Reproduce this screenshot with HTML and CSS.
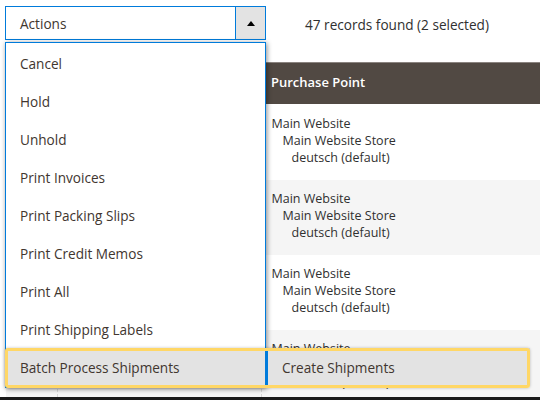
FILE: index.html
```html
<!DOCTYPE html>
<html>
<head>
<meta charset="utf-8">
<link rel="stylesheet" href="styles.css">
</head>
<body>
<div class="page">
  <div class="toolbar">
    <div class="actions">
      <div class="select">
        <span class="select-label">Actions</span>
        <span class="select-btn"><i class="tri"></i></span>
      </div>
      <ul class="menu">
        <li class="menu-item">Cancel</li>
        <li class="menu-item">Hold</li>
        <li class="menu-item">Unhold</li>
        <li class="menu-item">Print Invoices</li>
        <li class="menu-item">Print Packing Slips</li>
        <li class="menu-item">Print Credit Memos</li>
        <li class="menu-item">Print All</li>
        <li class="menu-item">Print Shipping Labels</li>
        <li class="menu-item active">Batch Process Shipments
          <ul class="submenu">
            <li class="submenu-item">Create Shipments</li>
          </ul>
        </li>
      </ul>
      <div class="highlight"></div>
    </div>
    <div class="count">47 records found (2 selected)</div>
  </div>
  <div class="grid-wrap">
    <table class="grid">
      <thead>
        <tr><th class="c1"></th><th class="c2"></th><th class="c3">Purchase Point</th></tr>
      </thead>
      <tbody>
        <tr class="r first"><td class="c1"></td><td class="c2"></td><td class="c3"><span class="l1">Main Website</span><span class="l2">Main Website Store</span><span class="l3">deutsch (default)</span></td></tr>
        <tr class="r alt"><td class="c1"></td><td class="c2"></td><td class="c3"><span class="l1">Main Website</span><span class="l2">Main Website Store</span><span class="l3">deutsch (default)</span></td></tr>
        <tr class="r"><td class="c1"></td><td class="c2"></td><td class="c3"><span class="l1">Main Website</span><span class="l2">Main Website Store</span><span class="l3">deutsch (default)</span></td></tr>
        <tr class="r alt last"><td class="c1"></td><td class="c2"></td><td class="c3"><span class="l1">Main Website</span><span class="l2">Main Website Store</span><span class="l3">deutsch (default)</span></td></tr>
      </tbody>
    </table>
  </div>
  <div class="bottom-bar"></div>
</div>
</body>
</html>
```

FILE: styles.css
```css
* { box-sizing: border-box; }
html, body { margin: 0; padding: 0; background: #fff; }
body { font-family: "Open Sans", "Liberation Sans", sans-serif; color: #303030; }

.page {
  width: 540px;
  height: 400px;
  display: flex;
  flex-direction: column;
  overflow: hidden;
}

.toolbar {
  display: flex;
  align-items: center;
  height: 62px;
  padding: 6px 0 22px 5px;
  flex: none;
}

.actions {
  position: relative;
  width: 261px;
  height: 34px;
  z-index: 5;
}

.select {
  display: flex;
  height: 34px;
  border: 1px solid #007bdb;
  background: #fff;
}
.select-label {
  flex: 1;
  padding: 1px 0 0 14px;
  font-size: 13.6px;
  line-height: 31px;
  color: #41362f;
}
.select-btn {
  width: 30px;
  background: #e3e3e3;
  border-left: 1px solid #007bdb;
  display: flex;
  align-items: center;
  justify-content: center;
}
.tri {
  width: 0;
  height: 0;
  border-left: 4px solid transparent;
  border-right: 4px solid transparent;
  border-bottom: 5px solid #000;
}

.menu {
  position: absolute;
  top: 36px;
  left: 0;
  width: 261px;
  margin: 0;
  padding: 1px 0;
  list-style: none;
  background: #fff;
  border: 1px solid #007bdb;
  box-shadow: 1px 1px 5px rgba(0, 0, 0, 0.45);
}
.menu-item {
  position: relative;
  height: 38px;
  padding: 2px 0 0 14px;
  line-height: 36px;
  font-size: 13.6px;
  color: #41362f;
  white-space: nowrap;
}
.menu-item.active { background: #e3e3e3; }

.submenu {
  position: absolute;
  top: 0;
  left: calc(100% + 1px);
  width: 264px;
  margin: 0;
  padding: 0;
  list-style: none;
}
.submenu-item {
  height: 38px;
  padding: 2px 0 0 14px;
  line-height: 36px;
  font-size: 13.6px;
  color: #41362f;
  background: #e3e3e3;
  border-left: 2px solid #007bdb;
}

.highlight {
  position: absolute;
  left: 0;
  top: 342px;
  width: 525px;
  height: 40px;
  border: 3px solid #ffd766;
  border-radius: 3px;
  box-shadow: 0 0 3px rgba(0, 0, 0, 0.25);
  pointer-events: none;
}

.count {
  margin: 2px 0 0 39px;
  font-size: 13.6px;
  color: #303030;
}

.grid-wrap {
  flex: 1;
  overflow: hidden;
  padding-left: 6px;
}
.grid {
  width: 100%;
  border-collapse: collapse;
  table-layout: fixed;
}
.grid .c1 { width: 51px; }
.grid .c2 { width: 204px; }
.grid th {
  height: 41px;
  background: #514943;
  color: #fff;
  font-size: 13px;
  font-weight: 600;
  text-align: left;
  padding: 0 0 3px 10px;
  border-top: 1px solid #8a837f;
}
.grid td {
  vertical-align: top;
  padding: 10px 0 0 10px;
  font-size: 12.5px;
  line-height: 17px;
  color: #303030;
}
.grid td.c2, .grid td.c3 { border-left: 1px dashed #d6d6d6; }
.grid tr.r { height: 75px; }
.grid tr.first { height: 76px; }
.grid tr.first td { padding-top: 11px; }
.grid tr.last { height: 67px; }
.grid tr.alt td { background: #f5f5f5; }

.l1, .l2, .l3 { display: block; white-space: nowrap; }
.l2 { margin-left: 11px; }
.l3 { margin-left: 20px; }

.bottom-bar {
  flex: none;
  height: 3px;
  background: #1a1a1a;
}
```
